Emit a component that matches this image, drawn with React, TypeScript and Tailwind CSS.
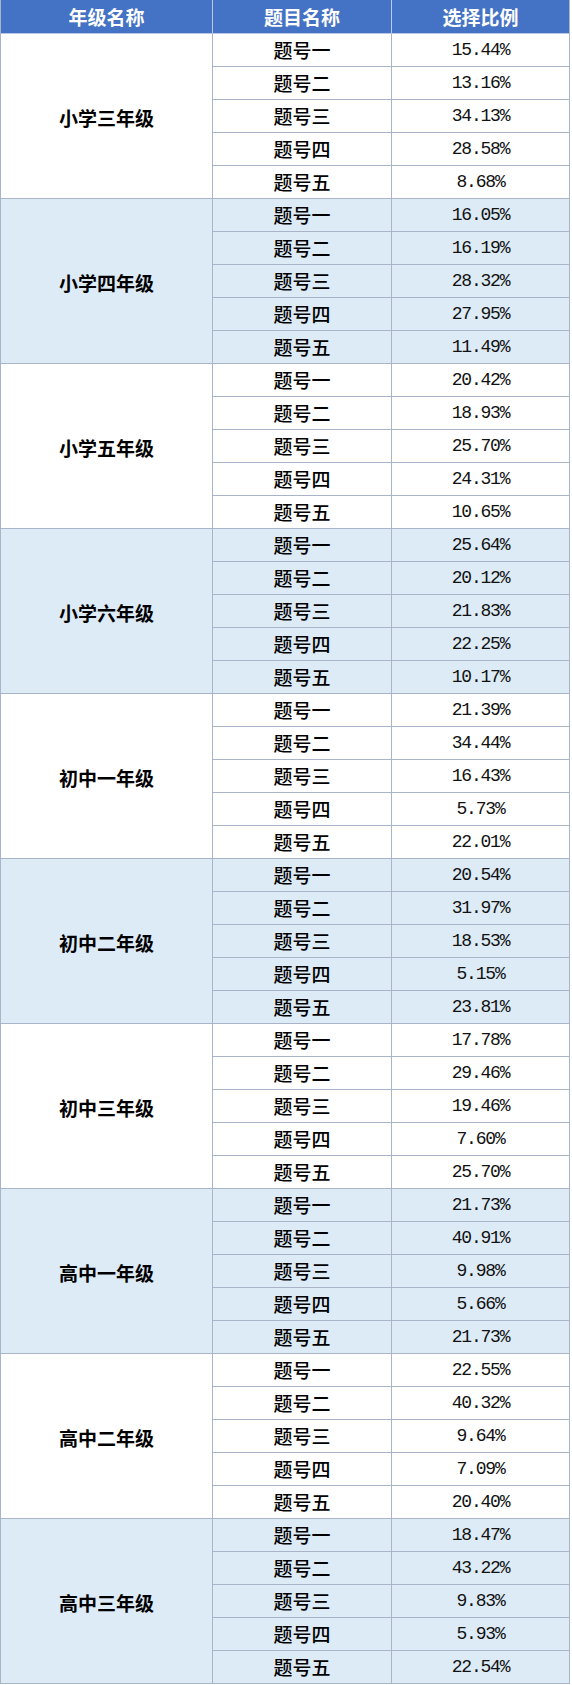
import React from "react";

const groups: { name: string; vals: string[] }[] = [
  { name: "小学三年级", vals: ["15.44%", "13.16%", "34.13%", "28.58%", "8.68%"] },
  { name: "小学四年级", vals: ["16.05%", "16.19%", "28.32%", "27.95%", "11.49%"] },
  { name: "小学五年级", vals: ["20.42%", "18.93%", "25.70%", "24.31%", "10.65%"] },
  { name: "小学六年级", vals: ["25.64%", "20.12%", "21.83%", "22.25%", "10.17%"] },
  { name: "初中一年级", vals: ["21.39%", "34.44%", "16.43%", "5.73%", "22.01%"] },
  { name: "初中二年级", vals: ["20.54%", "31.97%", "18.53%", "5.15%", "23.81%"] },
  { name: "初中三年级", vals: ["17.78%", "29.46%", "19.46%", "7.60%", "25.70%"] },
  { name: "高中一年级", vals: ["21.73%", "40.91%", "9.98%", "5.66%", "21.73%"] },
  { name: "高中二年级", vals: ["22.55%", "40.32%", "9.64%", "7.09%", "20.40%"] },
  { name: "高中三年级", vals: ["18.47%", "43.22%", "9.83%", "5.93%", "22.54%"] },
];

const qs = ["题号一", "题号二", "题号三", "题号四", "题号五"];

const cjk = "font-['Noto_Sans_CJK_SC',sans-serif]";

export default function App() {
  return (
    <div className="w-[572px] bg-white">
      <div className="w-[570px] border-l border-r border-[#a9b4c8]">
        <div className={`flex h-[34px] bg-[#4472c4] border-b border-[#b8c7e3] text-white text-[19px] font-bold ${cjk}`}>
          <div className="w-[212px] border-r border-[#b8c7e3] flex items-center justify-center leading-none">年级名称</div>
          <div className="w-[179px] border-r border-[#b8c7e3] flex items-center justify-center leading-none">题目名称</div>
          <div className="flex-1 flex items-center justify-center leading-none">选择比例</div>
        </div>
        {groups.map((g, gi) => (
          <div key={g.name} className={`flex ${gi % 2 === 1 ? "bg-[#ddebf7]" : "bg-white"}`}>
            <div className={`w-[212px] border-r border-b border-[#a9b4c8] flex items-center justify-center text-[19px] font-bold text-black ${cjk}`}>
              <span className="pt-[4px]">{g.name}</span>
            </div>
            <div className="flex-1 flex flex-col">
              {g.vals.map((v, i) => (
                <div key={i} className="flex h-[33px] border-b border-[#a9b4c8]">
                  <div className={`w-[179px] border-r border-[#a9b4c8] flex items-center justify-center text-[19px] font-medium text-black ${cjk}`}>
                    {qs[i]}
                  </div>
                  <div className="flex-1 flex items-center justify-center text-[18px] tracking-[-1.2px] text-[#111] font-['Liberation_Mono',monospace]">
                    {v}
                  </div>
                </div>
              ))}
            </div>
          </div>
        ))}
      </div>
    </div>
  );
}
